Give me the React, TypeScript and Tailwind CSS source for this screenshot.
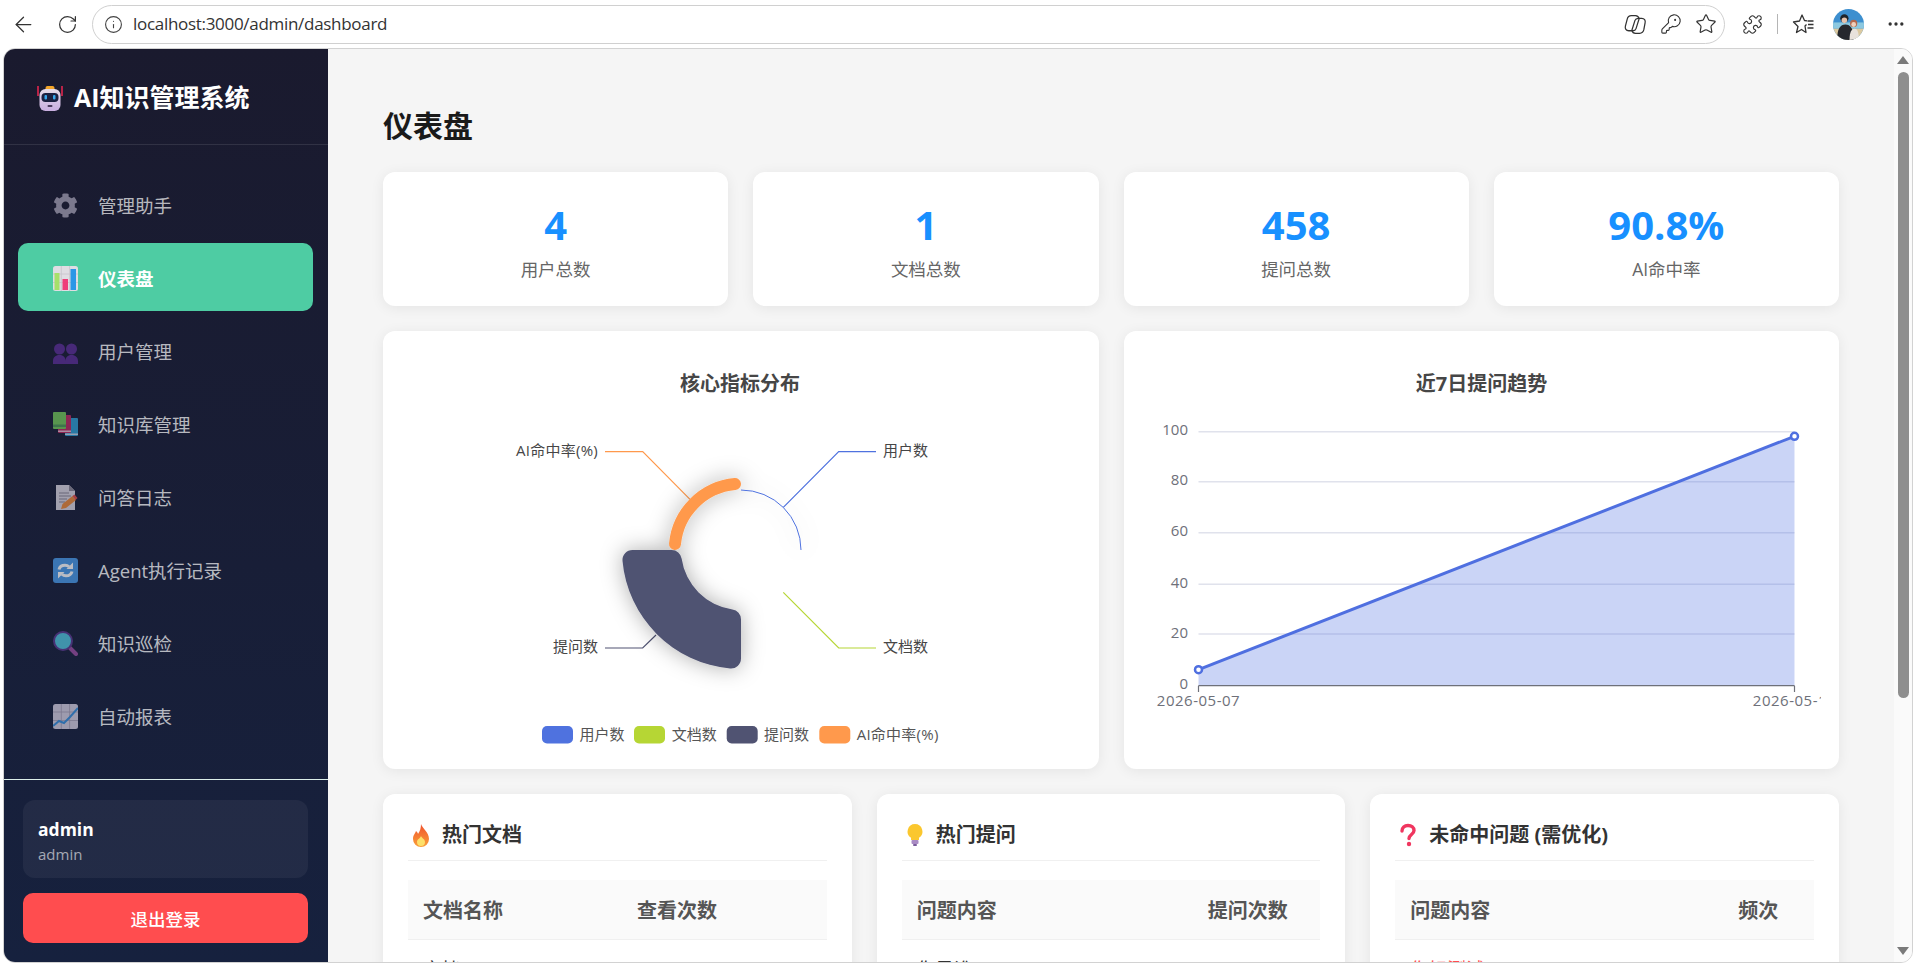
import { ArrowLeft, Info, KeyRound, MoreHorizontal, Puzzle, RotateCw, Star } from "lucide-react";
import { FaCog } from "react-icons/fa";
import type { ReactNode } from "react";

const FONT = "[font-family:'Open_Sans','Noto_Sans_CJK_SC',sans-serif]";
const CARD = "rounded-[12px] bg-white shadow-[0_2px_14px_rgba(0,0,0,0.07)]";

function CopilotIcon() {
  return (
    <svg width="25" height="25" viewBox="0 0 24 24" fill="none" stroke="#333" strokeWidth="1.2">
      <path d="M8 3.500h4c2 0 3 1 3.500 3l-3 9.500c-.5 1.500-1.500 2-3 2H5.500c-2.500 0-3.800-2-3.200-4.500L4 7C4.500 4.800 6 3.500 8 3.500z" />
      <path d="M16 20.500h-4c-2 0-3-1-3.500-3l3-9.500c.5-1.500 1.500-2 3-2h3.500c2.500 0 3.800 2 3.200 4.500L20 17c-.5 2.200-2 3.500-4 3.500z" />
    </svg>
  );
}

function FavoritesIcon() {
  return (
    <svg width="24" height="24" viewBox="0 0 24 24" fill="none" stroke="#333" strokeWidth="1.3" strokeLinejoin="round">
      <path d="M15 8.800l-2.500-.3L10 3 7.500 9 1.500 10l4.500 4.500-1.500 6 5-3 4.500 3-1-6.500 1.500-1.500" />
      <path d="M15.500 9h6M16 12.500h5.500M15.500 16h6" />
    </svg>
  );
}

function Avatar() {
  return (
    <svg width="31" height="31" viewBox="0 0 30 30">
      <defs>
        <clipPath id="avatar-clip">
          <circle cx="15" cy="15" r="15" />
        </clipPath>
      </defs>
      <g clipPath="url(#avatar-clip)">
        <rect width="30" height="30" fill="#3d8fcf" />
        <rect y="13" width="30" height="6" fill="#8cc8e0" />
        <rect y="19" width="30" height="11" fill="#dcc9a0" />
        <circle cx="11" cy="9" r="4" fill="#1f2328" />
        <path d="M4 30c0-11 3-15 8-15s8 4 8 15z" fill="#26282d" />
        <circle cx="11" cy="11" r="2.700" fill="#e6c3ac" />
        <circle cx="20" cy="14" r="3.500" fill="#b4684c" />
        <circle cx="20" cy="15" r="2.300" fill="#efd0bc" />
        <path d="M16 30c0-8 2-11 5-11s4 4 4 11z" fill="#e8e2dc" />
      </g>
    </svg>
  );
}

function RobotIcon() {
  return (
    <svg width="26" height="27" viewBox="0 0 26 27">
      <defs>
        <linearGradient id="robot-head" x1="0" y1="0" x2="0" y2="1">
          <stop offset="0" stopColor="#e4dbe8" />
          <stop offset="1" stopColor="#c9aee0" />
        </linearGradient>
      </defs>
      <path d="M1 2v10M25 2v10" stroke="#e0264f" strokeWidth="1.600" />
      <rect x="8.500" y="2" width="9" height="5" rx="2" fill="#f4a62a" />
      <rect x="2.500" y="5" width="21" height="22" rx="6" fill="url(#robot-head)" />
      <rect x="4.500" y="9" width="17" height="9" rx="4" fill="#1c2140" />
      <rect x="7.500" y="11" width="2.500" height="4.500" rx="1" fill="#37a8ee" />
      <rect x="16" y="11" width="2.500" height="4.500" rx="1" fill="#37a8ee" />
      <rect x="10.500" y="21" width="5" height="2" rx="1" fill="#4a3b5c" />
    </svg>
  );
}

function ChartIcon() {
  return (
    <svg width="25" height="25" viewBox="0 0 25 25">
      <rect width="25" height="25" rx="2.500" fill="#dfdde3" />
      <path d="M0 8h25M0 16.500h25M8.300 0v25M16.600 0v25" stroke="#c6c3cc" strokeWidth="0.800" />
      <rect x="1.500" y="7" width="5" height="17" fill="#a6e06a" />
      <rect x="9.500" y="13" width="5.500" height="11" fill="#ef3c79" />
      <rect x="17.500" y="3" width="5.500" height="21" fill="#2b97e6" />
    </svg>
  );
}

function PeopleIcon() {
  return (
    <svg width="25" height="25" viewBox="0 0 25 25" fill="#5b2f96">
      <circle cx="6.500" cy="10" r="5.500" />
      <circle cx="18.500" cy="10" r="5.500" />
      <path d="M0 25v-3c0-3.500 2.500-6 6.500-6s6 2.500 6 6c0-3.500 2-6 6-6s6.500 2.500 6.500 6v3z" />
    </svg>
  );
}

function BooksIcon() {
  return (
    <svg width="25" height="25" viewBox="0 0 25 25">
      <rect x="12" y="6" width="13" height="18" rx="1" fill="#2f9fd4" />
      <rect x="12" y="21.500" width="13" height="1.500" fill="#c9d6e8" />
      <rect x="5" y="3" width="13" height="18" rx="1" fill="#c02a62" />
      <rect x="5" y="18.500" width="13" height="1.500" fill="#e6bcd0" />
      <rect x="0" y="0" width="13" height="17" rx="1" fill="#74c95a" />
      <rect x="0" y="12.500" width="13" height="2.500" fill="#4f9a57" />
    </svg>
  );
}

function MemoIcon() {
  return (
    <svg width="25" height="25" viewBox="0 0 25 25">
      <path d="M3 0h13l6 6v19H3z" fill="#dcd8e2" />
      <path d="M16 0l6 6h-6z" fill="#8f8a98" />
      <path d="M6 8h10M6 11h12M6 14h8M6 17h6" stroke="#8b8694" strokeWidth="1" />
      <path d="M8 24l1.500-5 10-8 3.500 4-10 8z" fill="#ee8b3a" />
      <path d="M19.500 11l2-1.500 3 3.500-2 2z" fill="#e2504c" />
    </svg>
  );
}

function SyncIcon() {
  return (
    <svg width="25" height="25" viewBox="0 0 25 25">
      <rect width="25" height="25" rx="3" fill="#4a9be8" />
      <path d="M6 11.500c.6-2.700 3-4.300 6-4.300 1.600 0 3 .5 4 1.500" fill="none" stroke="#fff" strokeWidth="3" />
      <path d="M20 4.500v6.500h-6.500z" fill="#fff" />
      <path d="M19 13.500c-.6 2.700-3 4.300-6 4.300-1.600 0-3-.5-4-1.500" fill="none" stroke="#fff" strokeWidth="3" />
      <path d="M5 20.500V14h6.500z" fill="#fff" />
    </svg>
  );
}

function SearchIcon() {
  return (
    <svg width="25" height="25" viewBox="0 0 25 25">
      <path d="M16 16l7 7" stroke="#9c4fa0" strokeWidth="4" strokeLinecap="round" />
      <circle cx="10" cy="10" r="9" fill="#52c4dc" stroke="#5c3a8f" strokeWidth="2" />
    </svg>
  );
}

function ReportIcon() {
  return (
    <svg width="25" height="25" viewBox="0 0 25 25">
      <rect width="25" height="25" rx="2.500" fill="#d6d0e0" />
      <path d="M0 8h25M0 16.500h25M8.300 0v25M16.600 0v25" stroke="#a7a0b4" strokeWidth="0.800" />
      <path d="M0 22l6-5 5 2 6-6 8-9" fill="none" stroke="#3a90dc" strokeWidth="2" />
    </svg>
  );
}

function FireIcon() {
  return (
    <svg width="20" height="24" viewBox="0 0 20 24">
      <defs>
        <linearGradient id="fire" x1="0" y1="0" x2="0" y2="1">
          <stop offset="0" stopColor="#f0512c" />
          <stop offset="1" stopColor="#f9a13a" />
        </linearGradient>
      </defs>
      <path d="M10 1c1 4 8 8 8 15a8 8 0 0 1-16 0c0-4 2-5 3-8 1 1 2 2 2 3 2-3 3-6 3-10z" fill="url(#fire)" />
      <path d="M10 13c.5 2 4 3 4 6a4 4 0 0 1-8 0c0-3 3-3 4-6z" fill="#fde06a" />
    </svg>
  );
}

function BulbIcon() {
  return (
    <svg width="20" height="24" viewBox="0 0 20 24">
      <path d="M10 1a7.500 7.500 0 0 1 4 13.800V17H6v-2.200A7.500 7.500 0 0 1 10 1z" fill="#fbc72e" />
      <rect x="6.500" y="17" width="7" height="4" rx="1" fill="#a98bc4" />
      <rect x="8" y="21" width="4" height="2" rx="1" fill="#7a5c9c" />
    </svg>
  );
}

function QuestionIcon() {
  return (
    <svg width="20" height="24" viewBox="0 0 20 24">
      <path d="M4 8c0-3.500 2.500-5.500 6-5.500s6 2 6 5c0 4-5 4-5 8" fill="none" stroke="#f0365f" strokeWidth="3.400" strokeLinecap="round" />
      <circle cx="11" cy="21" r="2.200" fill="#f0365f" />
    </svg>
  );
}

const NAV_ITEMS: { label: string; icon: ReactNode; active?: boolean }[] = [
  { label: "管理助手", icon: <FaCog size={25} color="#a5a1b5" /> },
  { label: "仪表盘", icon: <ChartIcon />, active: true },
  { label: "用户管理", icon: <PeopleIcon /> },
  { label: "知识库管理", icon: <BooksIcon /> },
  { label: "问答日志", icon: <MemoIcon /> },
  { label: "Agent执行记录", icon: <SyncIcon /> },
  { label: "知识巡检", icon: <SearchIcon /> },
  { label: "自动报表", icon: <ReportIcon /> },
];

function BrowserBar() {
  return (
    <div className="flex h-[48px] shrink-0 items-center bg-white text-[#333]">
      <ArrowLeft className="ml-[11px] h-[25px] w-[25px]" strokeWidth={1.2} />
      <RotateCw className="ml-[21px] h-[21px] w-[21px]" strokeWidth={1.4} />
      <div className="ml-[14px] flex h-[39px] w-[1633px] items-center rounded-full border border-[#d0d0d0] pr-[7px] pl-[11px]">
        <Info className="h-[19px] w-[19px] text-[#444]" strokeWidth={1.4} />
        <span className="ml-[10px] flex-1 text-[17px] tracking-[-0.3px] text-[#333]">localhost:3000/admin/dashboard</span>
        <CopilotIcon />
        <KeyRound className="ml-[12px] h-[22px] w-[22px]" strokeWidth={1.2} />
        <Star className="ml-[13px] h-[22px] w-[22px]" strokeWidth={1.3} />
      </div>
      <Puzzle className="ml-[17px] h-[21px] w-[21px]" strokeWidth={1.3} />
      <div className="ml-[14px] h-[20px] w-px bg-[#b5b5b5]" />
      <div className="ml-[14px]">
        <FavoritesIcon />
      </div>
      <div className="ml-[17px] flex">
        <Avatar />
      </div>
      <MoreHorizontal className="ml-[22px] h-[20px] w-[20px]" strokeWidth={2} />
    </div>
  );
}

function Sidebar() {
  return (
    <aside className="flex w-[324px] shrink-0 flex-col bg-gradient-to-b from-[#1a1a2e] to-[#16213e]">
      <div className="flex h-[96px] items-center gap-[11px] border-b border-white/10 pt-[2px] pl-[33px]">
        <RobotIcon />
        <span className="text-[25px] font-bold text-white">AI知识管理系统</span>
      </div>
      <nav className="flex flex-1 flex-col gap-[5px] pt-[25px] pr-[15px] pl-[14px]">
        {NAV_ITEMS.map((item) => (
          <div
            key={item.label}
            className={`flex h-[68px] shrink-0 items-center gap-[20px] rounded-[10px] pt-[3px] pl-[35px] text-[18.5px] ${
              item.active ? "bg-[#4ecca3] font-bold text-white" : "text-white/70"
            }`}
          >
            <span className={item.active ? "flex w-[25px]" : "flex w-[25px] opacity-70"}>{item.icon}</span>
            <span>{item.label}</span>
          </div>
        ))}
      </nav>
      <div className="border-t border-[#dcefe9] pt-[20px] pr-[20px] pb-[19px] pl-[19px]">
        <div className="flex h-[78px] flex-col justify-center rounded-[12px] bg-white/5 pt-[3px] pl-[15px]">
          <div className="text-[17.5px] leading-[26px] font-bold text-white">admin</div>
          <div className="text-[15px] leading-[24px] text-white/60">admin</div>
        </div>
        <div className="mt-[15px] flex h-[50px] items-center justify-center rounded-[10px] bg-[#ff4d4f] pt-[2px] text-[17.5px] font-medium text-white">
          退出登录
        </div>
      </div>
    </aside>
  );
}

function StatCard({ value, label }: { value: string; label: string }) {
  return (
    <div className={`${CARD} flex h-[134px] flex-col items-center justify-center pt-[3px]`}>
      <div className="text-[40px] leading-[50px] font-bold text-[#1890ff]">{value}</div>
      <div className="mt-[6px] text-[17.5px] leading-[26px] text-[#666]">{label}</div>
    </div>
  );
}

function CoreChart() {
  const labelCls = "fill-[#464646] text-[15px]";
  return (
    <svg viewBox="383 331 716 438" className="block h-[438px] w-[716px]">
      <defs>
        <filter id="sector-shadow" x="-40%" y="-40%" width="180%" height="180%">
          <feDropShadow dx="0" dy="0" stdDeviation="11" floodColor="#000" floodOpacity="0.32" />
        </filter>
      </defs>
      <text x="740" y="383" textAnchor="middle" dominantBaseline="central" className="fill-[#464646] text-[20px] font-bold">
        核心指标分布
      </text>

      <g fill="none" strokeWidth="1.200">
        <path d="M605 451.700H642.700L690 499.300" stroke="#ff994c" />
        <path d="M783.300 507.300L838.700 451.700H876" stroke="#4f72df" />
        <path d="M783.300 592.300L838.700 648H876" stroke="#b6d634" />
        <path d="M656 635L642.700 648H605" stroke="#505372" />
      </g>
      <text x="598" y="450" textAnchor="end" dominantBaseline="central" className={`${labelCls} tracking-[0.25px]`}>AI命中率(%)</text>
      <text x="883" y="450" dominantBaseline="central" className={labelCls}>用户数</text>
      <text x="883" y="646" dominantBaseline="central" className={labelCls}>文档数</text>
      <text x="598" y="646" textAnchor="end" dominantBaseline="central" className={labelCls}>提问数</text>

      <g filter="url(#sector-shadow)">
        <path d="M741 490A60 60 0 0 1 801 550" fill="none" stroke="#4f72df" strokeWidth="1" />
        <path d="M675 544A66.300 66.300 0 0 1 735 484" fill="none" stroke="#ff994c" strokeWidth="12" strokeLinecap="round" />
        <path
          d="M632.460 550L671.720 550A10 10 0 0 1 681.610 558.560A60 60 0 0 0 732.440 609.390A10 10 0 0 1 741 619.280L741 658.540A10 10 0 0 1 730.100 668.500A119 119 0 0 1 622.500 560.900A10 10 0 0 1 632.460 550Z"
          fill="#505372"
        />
      </g>

      <rect x="542" y="726" width="31" height="17.500" rx="5" fill="#4f72df" />
      <text x="579.500" y="734" dominantBaseline="central" className="fill-[#555] text-[15px]">用户数</text>
      <rect x="634" y="726" width="31" height="17.500" rx="5" fill="#b6d634" />
      <text x="671.700" y="734" dominantBaseline="central" className="fill-[#555] text-[15px]">文档数</text>
      <rect x="726.700" y="726" width="31" height="17.500" rx="5" fill="#505372" />
      <text x="764" y="734" dominantBaseline="central" className="fill-[#555] text-[15px]">提问数</text>
      <rect x="819.300" y="726" width="31" height="17.500" rx="5" fill="#ff994c" />
      <text x="856.700" y="734" dominantBaseline="central" className="fill-[#555] text-[15px] tracking-[0.25px]">AI命中率(%)</text>
    </svg>
  );
}

function TrendChart() {
  const ticks: [string, number][] = [
    ["100", 431.7],
    ["80", 481.7],
    ["60", 532.7],
    ["40", 584.3],
    ["20", 634],
    ["0", 685.7],
  ];
  return (
    <svg viewBox="1123 331 716 438" className="block h-[438px] w-[716px]">
      <defs>
        <clipPath id="trend-clip">
          <rect x="1142" y="356" width="678" height="388" />
        </clipPath>
      </defs>
      <text x="1480.500" y="383" textAnchor="middle" dominantBaseline="central" className="fill-[#464646] text-[20px] font-bold">
        近7日提问趋势
      </text>
      {ticks.slice(0, 5).map(([, y]) => (
        <line key={y} x1="1197.500" y1={y} x2="1793.500" y2={y} stroke="#e0e2ec" strokeWidth="1.500" />
      ))}
      <path d="M1197.500 669.700L1793.500 436.300V685.700H1197.500Z" fill="#4f6fe0" fillOpacity="0.3" />
      <path d="M1197.500 685.700H1793.500M1197.500 685.700V692M1793.500 685.700V692" stroke="#6e7079" strokeWidth="1.200" fill="none" />
      <path d="M1197.500 669.700L1793.500 436.300" stroke="#4f6fe0" strokeWidth="3" fill="none" />
      <circle cx="1197.500" cy="669.700" r="3.500" fill="#fff" stroke="#4f6fe0" strokeWidth="2.500" />
      <circle cx="1793.500" cy="436.300" r="3.500" fill="#fff" stroke="#4f6fe0" strokeWidth="2.500" />
      {ticks.map(([t, y]) => (
        <text key={t} x="1187" y={y - 2.5} textAnchor="end" dominantBaseline="central" className="fill-[#6e7079] text-[15px]">
          {t}
        </text>
      ))}
      <g clipPath="url(#trend-clip)" className="fill-[#6e7079] text-[15px] tracking-[0.5px]">
        <text x="1197.500" y="699.500" textAnchor="middle" dominantBaseline="central">2026-05-07</text>
        <text x="1793.500" y="699.500" textAnchor="middle" dominantBaseline="central">2026-05-13</text>
      </g>
    </svg>
  );
}

function TableCard({
  icon,
  title,
  cols,
  grid,
  row,
  rowCls,
}: {
  icon: ReactNode;
  title: string;
  cols: [string, string];
  grid: string;
  row: string;
  rowCls: string;
}) {
  return (
    <div className={`${CARD} h-[300px] p-[25px]`}>
      <div className="flex h-[42px] items-center gap-[10px] border-b border-[#f0f0f0] pb-[10px] text-[20px] font-bold text-[#333]">
        <span className="flex w-[24px] justify-center pl-[2px]">{icon}</span>
        <span>{title}</span>
      </div>
      <div className={`mt-[19px] grid h-[60px] ${grid} items-center border-b border-[#f0f0f0] bg-[#fafafa] pt-[2px] pl-[15px] text-[20px] font-bold text-[#555]`}>
        <span>{cols[0]}</span>
        <span>{cols[1]}</span>
      </div>
      <div className={`pt-[15px] pl-[15px] text-[18.5px] ${rowCls}`}>{row}</div>
    </div>
  );
}

function Dashboard() {
  return (
    <main className="min-w-0 flex-1 overflow-hidden bg-[#f5f5f5] pt-[55px] pr-[55px] pl-[55px]">
      <h1 className="mb-[24px] h-[44px] text-[30px] leading-[44px] font-bold text-[#1a1a1a]">仪表盘</h1>
      <div className="grid grid-cols-4 gap-[25px]">
        <StatCard value="4" label="用户总数" />
        <StatCard value="1" label="文档总数" />
        <StatCard value="458" label="提问总数" />
        <StatCard value="90.8%" label="AI命中率" />
      </div>
      <div className="mt-[25px] grid grid-cols-2 gap-[25px]">
        <div className={`${CARD} overflow-hidden`}>
          <CoreChart />
        </div>
        <div className={`${CARD} overflow-hidden`}>
          <TrendChart />
        </div>
      </div>
      <div className="mt-[25px] grid grid-cols-3 gap-[25px]">
        <TableCard icon={<FireIcon />} title="热门文档" cols={["文档名称", "查看次数"]} grid="grid-cols-[214px_1fr]" row="文档" rowCls="text-[#333]" />
        <TableCard icon={<BulbIcon />} title="热门提问" cols={["问题内容", "提问次数"]} grid="grid-cols-[291px_1fr]" row="你是谁" rowCls="text-[#333]" />
        <TableCard icon={<QuestionIcon />} title="未命中问题 (需优化)" cols={["问题内容", "频次"]} grid="grid-cols-[328px_1fr]" row="你好测试" rowCls="text-[#ff4d4f]" />
      </div>
    </main>
  );
}

function Scrollbar() {
  return (
    <div className="flex w-[18px] shrink-0 flex-col items-center bg-[#fafafa]">
      <svg width="12" height="8" viewBox="0 0 12 8" className="mt-[7px]">
        <path d="M6 0l6 8H0z" fill="#7a7a7a" />
      </svg>
      <div className="mt-[8px] h-[626px] w-[11px] rounded-full bg-[#8e8e8e]" />
      <svg width="12" height="8" viewBox="0 0 12 8" className="mt-auto mb-[7px]">
        <path d="M6 8L12 0H0z" fill="#7a7a7a" />
      </svg>
    </div>
  );
}

export default function App() {
  return (
    <div className={`flex h-[965px] w-[1915px] flex-col overflow-hidden bg-white ${FONT}`}>
      <BrowserBar />
      <div className="mr-[2px] mb-[2px] ml-[3px] flex min-h-0 flex-1 overflow-hidden rounded-[12px] border border-[#d2d2d2]">
        <Sidebar />
        <Dashboard />
        <Scrollbar />
      </div>
    </div>
  );
}
